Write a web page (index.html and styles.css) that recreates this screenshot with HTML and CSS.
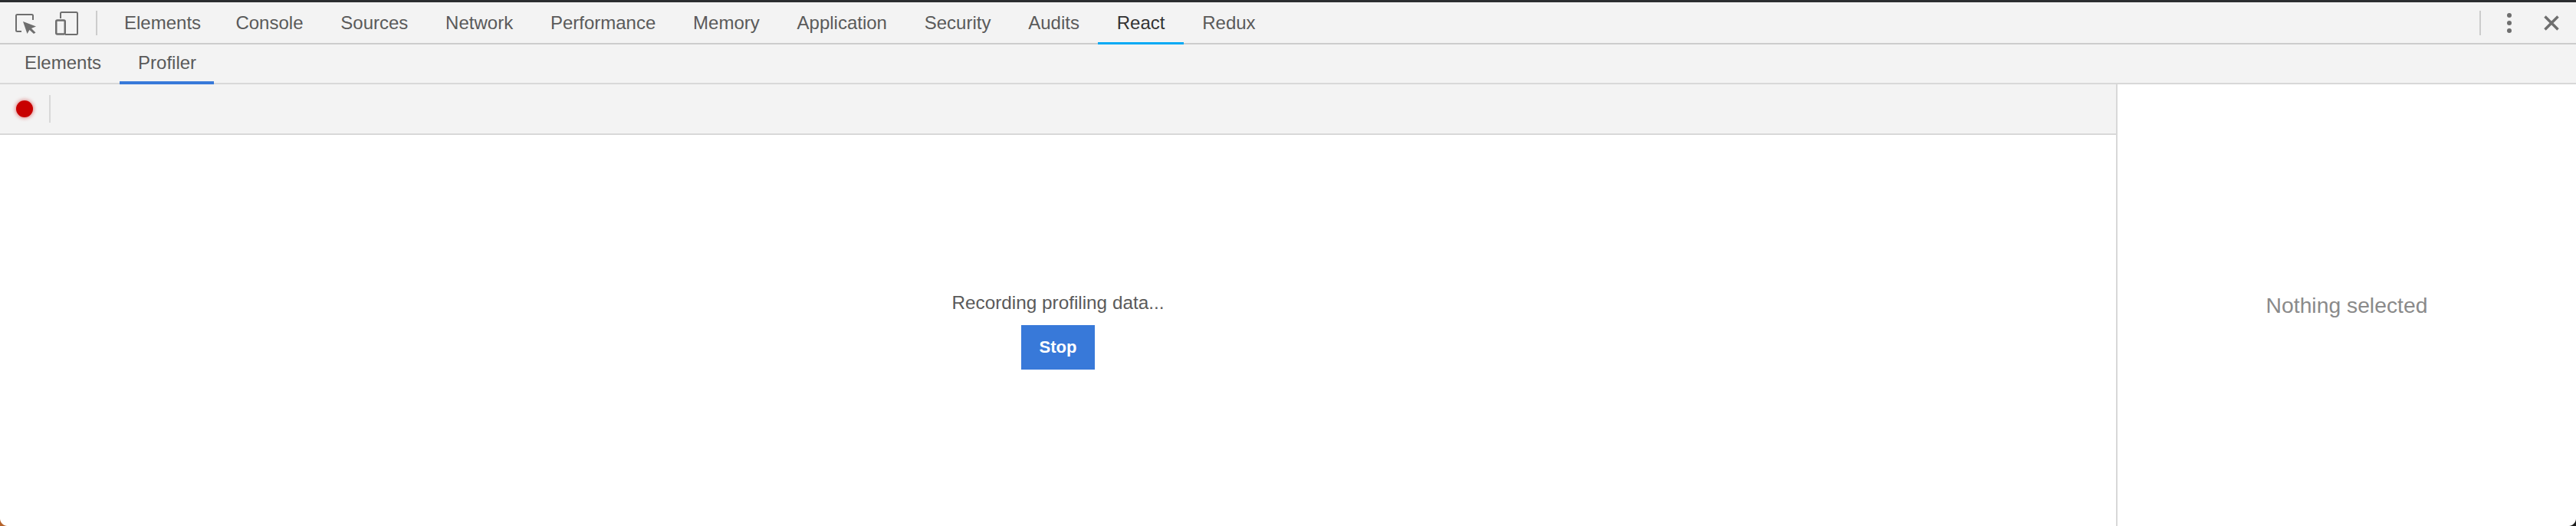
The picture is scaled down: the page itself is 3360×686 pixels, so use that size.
FILE: index.html
```html
<!DOCTYPE html>
<html lang="en">
<head>
<meta charset="utf-8">
<title>DevTools Profiler</title>
<link rel="stylesheet" href="styles.css">
</head>
<body>
<div class="app">
  <header class="main-bar">
    <div class="tool-icons">
      <svg class="icon-inspect" width="27" height="26" viewBox="0 0 27 26" aria-hidden="true">
        <path d="M8 23H2.500A1.500 1.500 0 0 1 1 21.500V2.500A1.500 1.500 0 0 1 2.500 1H21.500A1.500 1.500 0 0 1 23 2.500V8" fill="none" stroke="#6e6e6e" stroke-width="2"/>
        <path d="M10 10L27 16.500L21 19L26.500 24.500L24 26L18.500 21L15.500 26Z" fill="#6e6e6e"/>
      </svg>
      <svg class="icon-device" width="30" height="31" viewBox="0 0 30 31" aria-hidden="true">
        <path d="M7 9V2.500A1.500 1.500 0 0 1 8.500 1H27.500A1.500 1.500 0 0 1 29 2.500V28.500A1.500 1.500 0 0 1 27.500 30H13" fill="none" stroke="#6e6e6e" stroke-width="2"/>
        <rect x="1.250" y="11.500" width="11.500" height="18" rx="1.500" fill="none" stroke="#6e6e6e" stroke-width="2.500"/>
      </svg>
    </div>
    <span class="divider divider-main"></span>
    <nav class="main-tabs">
      <span class="tab tab-first">Elements</span>
      <span class="tab">Console</span>
      <span class="tab">Sources</span>
      <span class="tab">Network</span>
      <span class="tab">Performance</span>
      <span class="tab">Memory</span>
      <span class="tab">Application</span>
      <span class="tab">Security</span>
      <span class="tab">Audits</span>
      <span class="tab tab-active">React</span>
      <span class="tab">Redux</span>
    </nav>
    <div class="bar-end">
      <span class="divider"></span>
      <span class="dots"><i></i><i></i><i></i></span>
      <svg class="icon-close" width="20" height="20" viewBox="0 0 20 20" aria-hidden="true">
        <path d="M1.500 1.500L18.500 18.500M18.500 1.500L1.500 18.500" stroke="#6e6e6e" stroke-width="3.500" fill="none"/>
      </svg>
    </div>
  </header>
  <nav class="sub-bar">
    <span class="sub-tab">Elements</span>
    <span class="sub-tab sub-tab-active">Profiler</span>
  </nav>
  <div class="workspace">
    <main class="profiler">
      <div class="record-bar">
        <span class="record-dot"></span>
        <span class="divider divider-record"></span>
      </div>
      <div class="recording">
        <p class="recording-text">Recording profiling data...</p>
        <button class="stop" type="button">Stop</button>
      </div>
    </main>
    <aside class="details">Nothing selected</aside>
  </div>
  <span class="corner corner-left"></span>
  <span class="corner corner-right"></span>
</div>
</body>
</html>
```
FILE: styles.css
```css
* { box-sizing: border-box; }
html, body { margin: 0; height: 100%; }
body { font-family: "Liberation Sans", Arial, sans-serif; background: #fff; overflow: hidden; }
.app { position: relative; display: flex; flex-direction: column; width: 3360px; height: 686px; overflow: hidden; }

.main-bar { display: flex; align-items: center; height: 58px; padding-top: 1px; background: #f3f3f3; border-top: 3px solid #2b2d30; border-bottom: 2px solid #ccc; }
.tool-icons { display: flex; align-items: center; gap: 25px; padding-left: 20px; }
.icon-inspect { display: block; margin-top: 1px; }
.icon-device { display: block; }
.divider { display: block; width: 2px; background: #ccc; }
.main-bar .divider { height: 32px; }
.divider-main { margin-left: 23px; }
.main-tabs { display: flex; align-self: stretch; margin-left: 11px; }
.tab { display: flex; align-items: center; padding: 0 24.4px; font-size: 24px; color: #5a5a5a; border-bottom: 3px solid transparent; margin-bottom: -2px; }
.tab-first { padding: 0 21px 0 24px; }
.tab-active { color: #333; border-bottom-color: #03a9f4; }
.bar-end { display: flex; align-items: center; margin-left: auto; padding-right: 22px; }
.dots { display: flex; flex-direction: column; gap: 4px; margin-left: 34px; }
.dots i { display: block; width: 6px; height: 6px; border-radius: 50%; background: #6e6e6e; }
.icon-close { display: block; margin-left: 42px; }

.sub-bar { display: flex; height: 52px; background: #f3f3f3; border-bottom: 2px solid #d8d8d8; padding-left: 8px; }
.sub-tab { display: flex; align-items: center; padding: 0 24px; font-size: 24px; color: #5a5a5a; margin-bottom: -2px; border-bottom: 4px solid transparent; }
.sub-tab-active { padding-right: 23px; border-bottom-color: #3879d9; }

.workspace { display: flex; flex: 1; min-height: 0; }
.profiler { display: flex; flex-direction: column; flex: 1; min-width: 0; }
.record-bar { display: flex; align-items: center; height: 66px; background: #f3f3f3; border-bottom: 2px solid #d8d8d8; padding-left: 21px; }
.record-dot { display: block; width: 22px; height: 22px; border-radius: 50%; background: #c80000; box-shadow: 0 0 5px 1px rgba(200, 0, 0, 0.45); }
.divider-record { height: 36px; margin-left: 21px; background: #d8d8d8; }
.recording { display: flex; flex: 1; flex-direction: column; align-items: center; justify-content: center; padding-bottom: 1px; }
.recording-text { margin: 0 0 13px; font-size: 24.3px; line-height: 32px; color: #5a5a5a; }
.stop { width: 96px; height: 58px; padding: 0; border: 0; background: #3879d9; color: #fff; font: bold 22px "Liberation Sans", Arial, sans-serif; }

.details { display: flex; align-items: center; justify-content: center; width: 600px; border-left: 2px solid #d8d8d8; font-size: 28.3px; color: #8a8a8a; }

.corner { position: absolute; bottom: 0; width: 10px; height: 10px; }
.corner-left { left: 0; background: radial-gradient(circle at 100% 0, transparent 9.500px, #b5622a 10.500px); }
.corner-right { right: 0; background: radial-gradient(circle at 0 0, transparent 9.500px, #1c1c1c 10.500px); }
```
